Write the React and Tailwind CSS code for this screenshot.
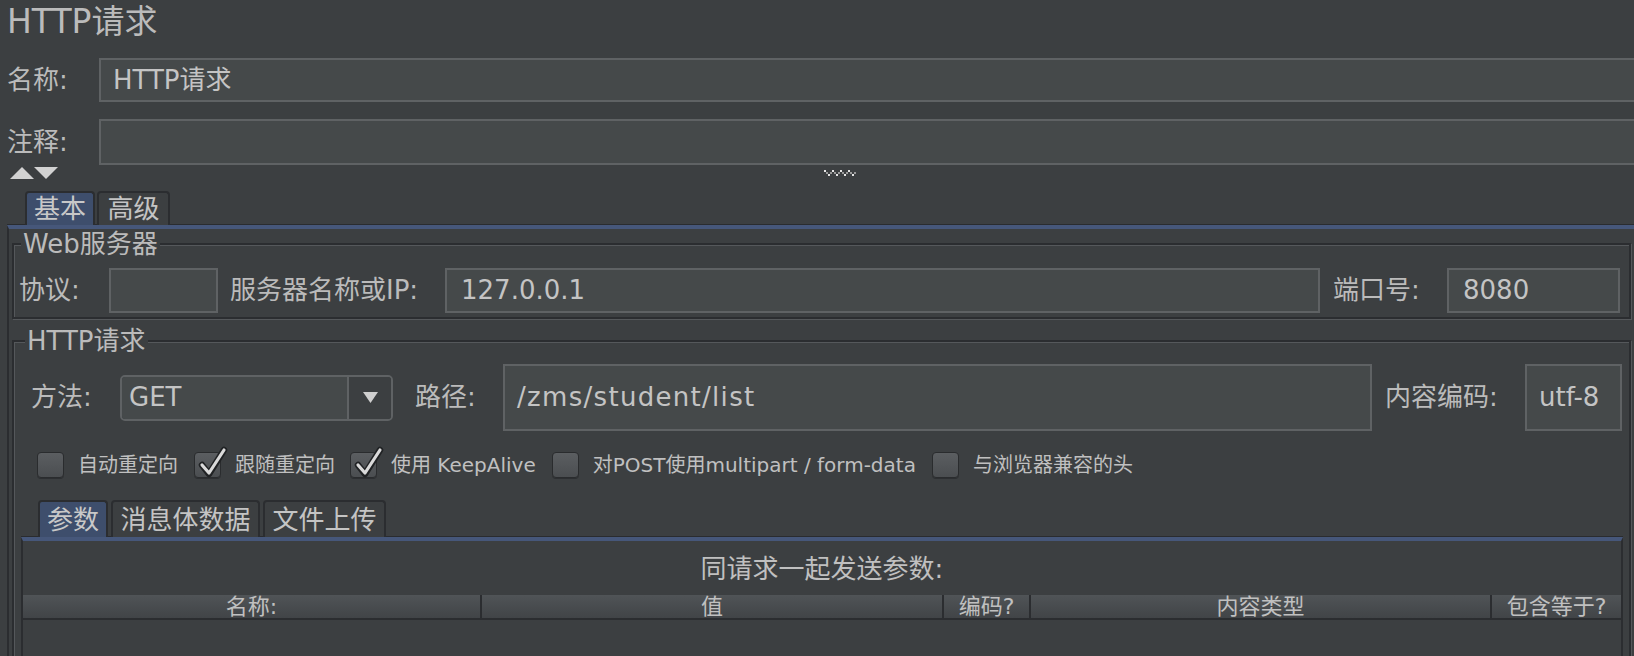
import React from "react";

// JMeter "HTTP请求" sampler panel, Darcula look

const FONT = "font-['DejaVu_Sans','Noto_Sans_CJK_SC',sans-serif]";

const Field = ({ className = "", children }) => (
  <div className={`h-full border-2 border-[#5f6264] bg-[#45494a] flex items-center pl-[12px] text-[26px] text-[#c4c4c4] overflow-hidden whitespace-nowrap ${className}`}>
    {children}
  </div>
);

const Tab = ({ active, className = "", children }) => (
  <div
    className={`h-full flex items-center justify-center rounded-t-[4px] border-2 border-b-0 border-[#2b2d30] text-[26px] leading-none ${
      active ? "bg-[#3e4e6c] text-[#c8c8c8]" : "bg-[#3c3f41] text-[#c4c4c4]"
    } ${className}`}
  >
    {children}
  </div>
);

const CheckBox = ({ checked, label, gap }) => (
  <div className={`flex items-center h-full ${gap}`}>
    <div className="relative w-[27px] h-[26px] rounded-[4px] border border-[#2a2c2e] bg-gradient-to-b from-[#5b5e61] to-[#4b4e51] shadow-[0_1px_0_#2d2f32]">
      {checked && (
        <svg className="absolute left-[0px] top-[-7px]" width="34" height="34" viewBox="0 0 34 34">
          <polyline points="7,19 14,28 29,4" fill="none" stroke="#202224" strokeWidth="6.5" strokeLinecap="round" strokeLinejoin="round" />
          <polyline points="7,19 14,27 29,4" fill="none" stroke="#dadada" strokeWidth="3.2" strokeLinecap="round" strokeLinejoin="round" />
        </svg>
      )}
    </div>
    <span className="ml-[14px] text-[20px] text-[#c0c0c0] whitespace-nowrap">{label}</span>
  </div>
);

const Grip = () => {
  const dots = [];
  for (let i = 0; i < 4; i++) {
    const x = i * 8;
    dots.push([x, 0], [x + 2, 2], [x + 4, 4], [x + 6, 2]);
  }
  return (
    <svg width="32" height="7" viewBox="0 0 32 7">
      {dots.map(([x, y], i) => (
        <rect key={i} x={x} y={y} width="2" height="2" fill={i % 2 ? "#9a9a9a" : "#e6e6e6"} />
      ))}
    </svg>
  );
};

const etched = "border-2 border-[#2b2d30] shadow-[inset_1px_1px_0_#55585b,1px_1px_0_#55585b]";

export default function App() {
  const columns = [
    { name: "名称:", w: "w-[459px]" },
    { name: "值", w: "w-[462px]" },
    { name: "编码?", w: "w-[87px]" },
    { name: "内容类型", w: "w-[461px]" },
    { name: "包含等于?", w: "flex-1" },
  ];

  return (
    <div className={`w-[1634px] h-[656px] overflow-hidden bg-[#3c3f41] text-[#bbbbbb] ${FONT}`}>
      {/* title */}
      <div className="h-[46px] pl-[7px] text-[33px] leading-[44px] whitespace-nowrap">HTTP请求</div>

      {/* name / comment */}
      <div className="flex items-center h-[44px] mt-[12px] -mr-[6px]">
        <div className="w-[99px] pl-[7px] text-[26px] shrink-0">名称:</div>
        <Field className="flex-1">HTTP请求</Field>
      </div>
      <div className="flex items-center h-[46px] mt-[17px] -mr-[6px]">
        <div className="w-[99px] pl-[7px] text-[26px] shrink-0">注释:</div>
        <Field className="flex-1" />
      </div>

      {/* collapse arrows + splitter grip */}
      <div className="flex items-start h-[24px] mt-[2px]">
        <svg className="ml-[10px]" width="48" height="12" viewBox="0 0 48 12">
          <polygon points="0,12 12,0 24,12" fill="#d2d2d2" />
          <polygon points="24,0 48,0 36,12" fill="#d2d2d2" />
        </svg>
        <div className="ml-[766px] mt-[3px]">
          <Grip />
        </div>
      </div>

      {/* main tabs */}
      <div className="flex items-end h-[34px] pl-[25px] gap-[2px]">
        <Tab active className="w-[70px]">基本</Tab>
        <Tab className="w-[73px]">高级</Tab>
      </div>

      {/* tab body */}
      <div className="ml-[7px] w-[1640px] h-[500px] border-t-[4px] border-t-[#46577a] border-l-2 border-l-[#2b2d30] shadow-[0_-1px_0_#2a2c2f]">
        {/* Web服务器 */}
        <fieldset className={`ml-[3px] mt-[1px] w-[1619px] ${etched}`}>
          <legend className="ml-[7px] px-[2px] text-[26px] leading-[28px] bg-[#3c3f41]">Web服务器</legend>
          <div className="flex items-center h-[45px] mt-[10px] mb-[4px] pl-[5px]">
            <div className="w-[90px] text-[26px] shrink-0">协议:</div>
            <Field className="w-[109px] shrink-0" />
            <div className="w-[215px] ml-[12px] text-[26px] shrink-0 whitespace-nowrap">服务器名称或IP:</div>
            <Field className="w-[875px] shrink-0 pl-[14px]">127.0.0.1</Field>
            <div className="w-[114px] ml-[13px] text-[26px] shrink-0">端口号:</div>
            <Field className="w-[173px] shrink-0 pl-[14px]">8080</Field>
          </div>
        </fieldset>

        {/* HTTP请求 */}
        <fieldset className={`ml-[3px] mt-[8px] w-[1619px] h-[400px] ${etched}`}>
          <legend className="ml-[11px] px-[2px] text-[26px] leading-[28px] bg-[#3c3f41]">HTTP请求</legend>

          <div className="flex items-center h-[67px] mt-[9px] pl-[17px]">
            <div className="w-[89px] text-[26px] shrink-0">方法:</div>
            <div className="w-[273px] h-[46px] shrink-0 flex rounded-[5px] border-2 border-[#5f6264] overflow-hidden">
              <div className="flex-1 bg-[#45494a] pl-[7px] flex items-center text-[26px] text-[#c4c4c4]">GET</div>
              <div className="w-[44px] border-l-2 border-[#5f6264] bg-[#3c3f41] flex items-center justify-center">
                <svg width="15" height="11" viewBox="0 0 15 11">
                  <polygon points="0,0 15,0 7.5,11" fill="#cfcfcf" />
                </svg>
              </div>
            </div>
            <div className="w-[88px] ml-[22px] text-[26px] shrink-0">路径:</div>
            <Field className="w-[869px] shrink-0 pl-[12px] tracking-[0.05em]">/zms/student/list</Field>
            <div className="w-[140px] ml-[13px] text-[26px] shrink-0 whitespace-nowrap">内容编码:</div>
            <Field className="w-[97px] shrink-0 pl-[11px]">utf-8</Field>
          </div>

          <div className="flex items-center h-[30px] mt-[19px] pl-[23px]">
            <CheckBox label="自动重定向" />
            <CheckBox checked label="跟随重定向" gap="ml-[16px]" />
            <CheckBox checked label="使用 KeepAlive" gap="ml-[15px]" />
            <CheckBox label="对POST使用multipart / form-data" gap="ml-[16px]" />
            <CheckBox label="与浏览器兼容的头" gap="ml-[16px]" />
          </div>

          {/* sub tabs */}
          <div className="flex items-end h-[37px] mt-[20px] pl-[24px] gap-[3px]">
            <Tab active className="w-[70px]">参数</Tab>
            <Tab className="w-[149px]">消息体数据</Tab>
            <Tab className="w-[123px]">文件上传</Tab>
          </div>

          <div className="ml-[7px] w-[1602px] h-[200px] border-t-[4px] border-t-[#46577a] border-x-2 border-x-[#2b2d30] shadow-[0_-1px_0_#2a2c2f]">
            <div className="h-[54px] pt-[2px] flex items-center justify-center text-[26px] text-[#c0c0c0]">同请求一起发送参数:</div>
            <div className="flex h-[25px] bg-gradient-to-b from-[#505457] to-[#414447] border-b-2 border-[#2b2d30]">
              {columns.map((c, i) => (
                <div
                  key={i}
                  className={`${c.w} h-full flex items-center justify-center text-[22px] leading-none text-[#c0c0c0] ${
                    i < columns.length - 1 ? "border-r-2 border-[#2b2d30]" : ""
                  }`}
                >
                  {c.name}
                </div>
              ))}
            </div>
          </div>
        </fieldset>
      </div>
    </div>
  );
}
